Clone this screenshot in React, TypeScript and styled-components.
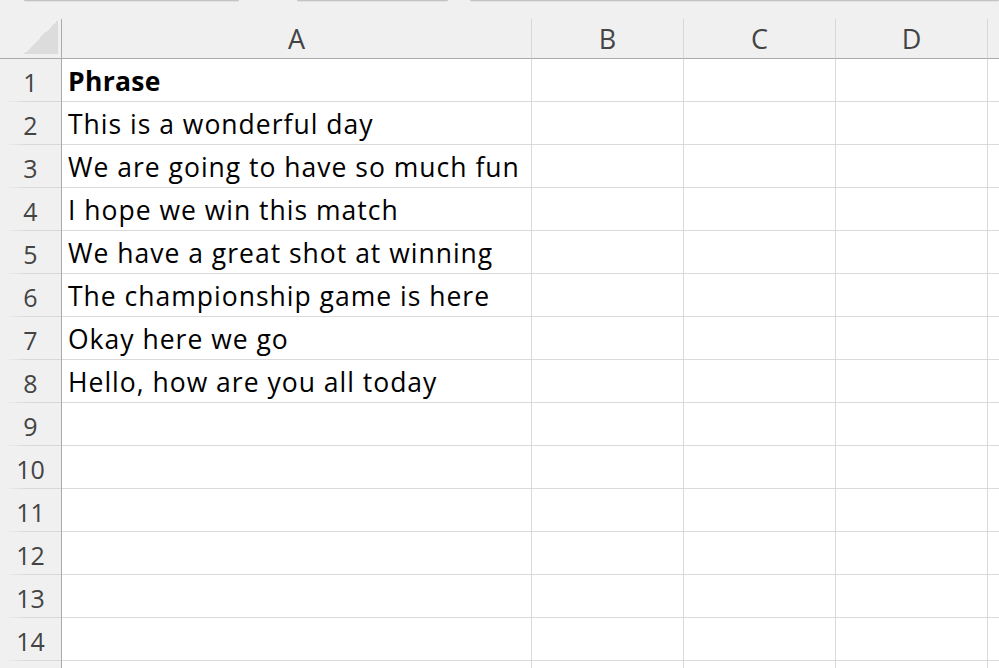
import React from "react";
import styled, { createGlobalStyle } from "styled-components";

const GlobalStyle = createGlobalStyle`
  html, body {
    margin: 0;
    padding: 0;
    background: #ffffff;
    overflow: hidden;
  }
  * { box-sizing: border-box; }
`;

const HEADER_BG = "#f0f0f0";
const GRID = "#dadada";
const HEADER_EDGE = "#ababab";

const Window = styled.div`
  width: 999px;
  height: 668px;
  overflow: hidden;
  background: ${HEADER_BG};
  display: flex;
  flex-direction: column;
`;

/* strip left over from the formula bar above the sheet */
const TopStrip = styled.div`
  height: 19px;
  flex: none;
  display: flex;
  align-items: flex-start;
  padding-left: 24px;
  background: ${HEADER_BG};
`;

const StripEdge = styled.div<{ $w?: number; $gap?: number }>`
  height: 2px;
  width: ${(p) => (p.$w ? `${p.$w}px` : "auto")};
  flex: ${(p) => (p.$w ? "none" : "1")};
  margin-right: ${(p) => p.$gap ?? 0}px;
  border-top: 1px solid #c4c4c4;
  background: #e2e2e2;
  border-radius: 0 0 2px 2px;
`;

const Sheet = styled.div`
  flex: 1;
  display: grid;
  grid-template-columns: 62px 470px 152px 152px 152px 1fr;
  grid-template-rows: 40px;
  grid-auto-rows: 43px;
  background: #ffffff;
  font-family: "Open Sans", "Noto Sans", sans-serif;
`;

const Corner = styled.div`
  background: ${HEADER_BG};
  border-bottom: 1px solid ${HEADER_EDGE};
  border-right: 1px solid ${HEADER_EDGE};
  display: flex;
  align-items: flex-end;
  justify-content: flex-end;
  padding: 0 3px 4px 0;
`;

const SelectAll = styled.div`
  width: 34px;
  height: 34px;
  background: linear-gradient(to bottom right, transparent 50%, #dcdcdc 50%);
`;

const ColHead = styled.div<{ $last?: boolean }>`
  background: ${HEADER_BG};
  border-bottom: 1px solid ${HEADER_EDGE};
  border-right: ${(p) => (p.$last ? "none" : "1px solid #d8d8d8")};
  display: flex;
  align-items: center;
  justify-content: center;
  font-size: 27px;
  color: #444444;
  padding-bottom: 1px;
`;

const RowHead = styled.div`
  position: relative;
  background: ${HEADER_BG};
  border-right: 1px solid ${HEADER_EDGE};
  display: flex;
  align-items: center;
  justify-content: center;
  font-size: 25px;
  color: #444444;
  padding-top: 3px;

  &::after {
    content: "";
    position: absolute;
    left: 4px;
    right: 0;
    bottom: 0;
    height: 1px;
    background: linear-gradient(to right, rgba(216, 216, 216, 0), #d8d8d8 40%);
  }
`;

const Cell = styled.div<{ $bold?: boolean; $last?: boolean }>`
  border-bottom: 1px solid ${GRID};
  border-right: ${(p) => (p.$last ? "none" : `1px solid ${GRID}`)};
  display: flex;
  align-items: center;
  padding: 2px 0 0 6px;
  font-size: 26.5px;
  letter-spacing: ${(p) => (p.$bold ? "0.3px" : "1px")};
  font-weight: ${(p) => (p.$bold ? 700 : 400)};
  color: #000000;
  white-space: nowrap;
`;

const columns = ["A", "B", "C", "D", ""];

const phrases: { text: string; bold?: boolean }[] = [
  { text: "Phrase", bold: true },
  { text: "This is a wonderful day" },
  { text: "We are going to have so much fun" },
  { text: "I hope we win this match" },
  { text: "We have a great shot at winning" },
  { text: "The championship game is here" },
  { text: "Okay here we go" },
  { text: "Hello, how are you all today" },
];

/* numbered rows that fit the window, plus one unlabelled row peeking in below */
const ROWS = 14;

function SheetRow({ label, text, bold }: { label: string; text?: string; bold?: boolean }) {
  return (
    <>
      <RowHead>{label}</RowHead>
      <Cell $bold={bold}>{text ?? ""}</Cell>
      <Cell />
      <Cell />
      <Cell />
      <Cell $last />
    </>
  );
}

export default function App() {
  return (
    <>
      <GlobalStyle />
      <Window>
        <TopStrip>
          <StripEdge $w={215} $gap={58} />
          <StripEdge $w={151} $gap={22} />
          <StripEdge />
        </TopStrip>
        <Sheet>
          <Corner>
            <SelectAll />
          </Corner>
          {columns.map((c, i) => (
            <ColHead key={`h${i}`} $last={i === columns.length - 1}>
              {c}
            </ColHead>
          ))}
          {Array.from({ length: ROWS }, (_, r) => (
            <SheetRow
              key={`r${r}`}
              label={String(r + 1)}
              text={phrases[r]?.text}
              bold={phrases[r]?.bold}
            />
          ))}
          <SheetRow label="" />
        </Sheet>
      </Window>
    </>
  );
}
